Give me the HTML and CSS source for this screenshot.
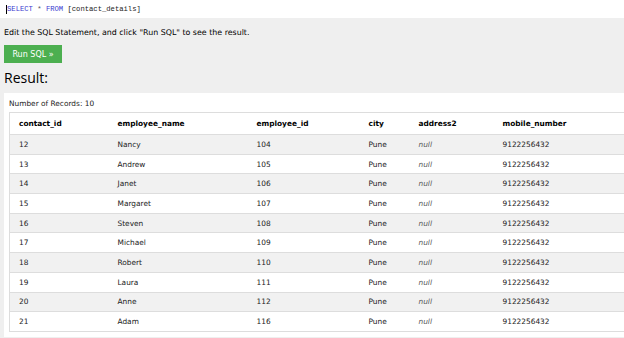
FILE: index.html
```html
<!DOCTYPE html>
<html lang="en">
<head>
  <meta charset="UTF-8">
  <title>SQL Tryit</title>
  <link rel="stylesheet" href="styles.css">
</head>
<body>
  <div class="editor">
    <span class="cursor"></span><code><span class="kw">SELECT</span> <span class="op">*</span> <span class="kw">FROM</span> [contact_details]</code>
  </div>

  <div class="main">
    <p class="hint">Edit the SQL Statement, and click "Run SQL" to see the result.</p>
    <button class="run-button">Run SQL &raquo;</button>
    <h3 class="result-title">Result:</h3>

    <div class="result-panel">
      <div class="records">Number of Records: 10</div>
      <table class="result-table">
        <colgroup>
          <col class="c1"><col class="c2"><col class="c3"><col class="c4"><col class="c5"><col class="c6">
        </colgroup>
        <thead>
          <tr><th>contact_id</th><th>employee_name</th><th>employee_id</th><th>city</th><th>address2</th><th>mobile_number</th></tr>
        </thead>
        <tbody>
          <tr><td>12</td><td>Nancy</td><td>104</td><td>Pune</td><td><i>null</i></td><td>9122256432</td></tr>
          <tr><td>13</td><td>Andrew</td><td>105</td><td>Pune</td><td><i>null</i></td><td>9122256432</td></tr>
          <tr><td>14</td><td>Janet</td><td>106</td><td>Pune</td><td><i>null</i></td><td>9122256432</td></tr>
          <tr><td>15</td><td>Margaret</td><td>107</td><td>Pune</td><td><i>null</i></td><td>9122256432</td></tr>
          <tr><td>16</td><td>Steven</td><td>108</td><td>Pune</td><td><i>null</i></td><td>9122256432</td></tr>
          <tr><td>17</td><td>Michael</td><td>109</td><td>Pune</td><td><i>null</i></td><td>9122256432</td></tr>
          <tr><td>18</td><td>Robert</td><td>110</td><td>Pune</td><td><i>null</i></td><td>9122256432</td></tr>
          <tr><td>19</td><td>Laura</td><td>111</td><td>Pune</td><td><i>null</i></td><td>9122256432</td></tr>
          <tr><td>20</td><td>Anne</td><td>112</td><td>Pune</td><td><i>null</i></td><td>9122256432</td></tr>
          <tr><td>21</td><td>Adam</td><td>116</td><td>Pune</td><td><i>null</i></td><td>9122256432</td></tr>
        </tbody>
      </table>
    </div>
  </div>
</body>
</html>
```

FILE: styles.css
```css
body {
  margin: 0;
  width: 700px;
  overflow: hidden;
  background: #efefef;
  font-family: 'DejaVu Sans', Verdana, sans-serif;
  color: #000;
}

.editor {
  background: #fff;
  height: 18px;
  display: flex;
  align-items: center;
  padding-left: 6px;
}

.cursor {
  width: 1px;
  height: 9px;
  background: #000;
}

.editor code {
  font-family: 'Liberation Mono', monospace;
  font-size: 7.2px;
  color: #222;
}

.kw {
  color: #3a3ad0;
}

.op {
  color: #556;
}

.main {
  padding: 0 4px;
}

.hint {
  margin: 0;
  padding-top: 9px;
  font-size: 7.9px;
  line-height: 12px;
}

.run-button {
  display: block;
  margin-top: 6px;
  width: 58px;
  height: 18px;
  padding: 0;
  border: none;
  background: #4caf50;
  color: #fff;
  font-family: 'DejaVu Sans', Verdana, sans-serif;
  font-size: 8px;
}

.result-title {
  margin: 4px 0 0;
  font-family: 'Open Sans', sans-serif;
  font-weight: normal;
  font-size: 14px;
  line-height: 22px;
}

.result-panel {
  background: #fff;
  margin-top: 4px;
  padding: 3px 5px 5px;
}

.records {
  font-size: 7.4px;
  line-height: 16px;
  color: #222;
}

.result-table {
  border-collapse: collapse;
  table-layout: fixed;
  width: 700px;
  border: 1px solid #ddd;
  font-size: 7.4px;
  color: #222;
}

.c1 { width: 99px; }
.c2 { width: 139px; }
.c3 { width: 112px; }
.c4 { width: 50px; }
.c5 { width: 84px; }

.result-table th,
.result-table td {
  text-align: left;
  padding: 0 0 0 9px;
  border-bottom: 1px solid #ddd;
  white-space: nowrap;
}

.result-table th {
  height: 21px;
  font-weight: bold;
  color: #000;
}

.result-table td {
  height: 18.7px;
}

.result-table tbody tr:nth-child(odd) {
  background: #f1f1f1;
}

.result-table i {
  color: #555;
}
```
